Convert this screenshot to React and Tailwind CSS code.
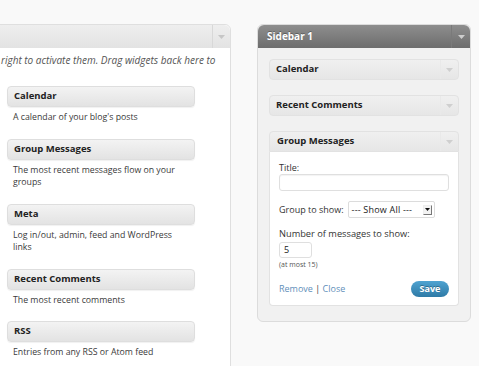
import React from "react";

const font = { fontFamily: '"Open Sans", "Liberation Sans", sans-serif' };

const Arrow = ({ color = "#bdbdbd" }) => (
    <svg width="7" height="4" viewBox="0 0 7 4"><path d="M0 0h7L3.5 4z" fill={color} /></svg>
);

const availableWidgets = [
    { title: "Calendar", desc: ["A calendar of your blog's posts"] },
    { title: "Group Messages", desc: ["The most recent messages flow on your", "groups"] },
    { title: "Meta", desc: ["Log in/out, admin, feed and WordPress", "links"] },
    { title: "Recent Comments", desc: ["The most recent comments"] },
    { title: "RSS", desc: ["Entries from any RSS or Atom feed"] },
];

const AvailableWidget = ({ title, desc }) => (
    <div className="w-[188px]">
        <div className="h-[21px] rounded-[4px] border border-[#dedede] bg-gradient-to-b from-[#f3f3f3] to-[#e3e3e3] shadow-[0_1px_1px_rgba(0,0,0,0.06)] pl-[6px] flex items-center text-[9.5px] font-bold text-[#222]">
            {title}
        </div>
        <div className="pt-[4px] pb-[15px] pl-[6px] text-[8.75px] leading-[12.5px] text-[#3a3a3a] whitespace-nowrap">
            {desc.map((line) => <div key={line}>{line}</div>)}
        </div>
    </div>
);

const SidebarWidget = ({ title }) => (
    <div className="h-[21px] rounded-[4px] border border-[#e2e2e2] bg-gradient-to-b from-[#f0f0f0] to-[#e6e6e6] flex items-center">
        <span className="flex-1 pl-[6px] text-[9.5px] font-bold text-[#222]">{title}</span>
        <span className="w-[18px] h-full border-l border-[#e9e9e9] flex items-center justify-center"><Arrow color="#cfcfcf" /></span>
    </div>
);

export default function App() {
    return (
        <div style={font} className="w-[479px] h-[366px] overflow-hidden bg-[#f9f9f9] flex items-start pt-[24px]">
            {/* Inactive widgets panel */}
            <div className="ml-[-8px] w-[239px] h-[360px] shrink-0 bg-white border border-[#dfdfdf] rounded-tr-[6px] flex flex-col">
                <div className="h-[23px] bg-gradient-to-b from-[#eeeeee] to-[#e3e3e3] rounded-tr-[6px] flex justify-end">
                    <span className="w-[18px] h-full border-l border-[#d8d8d8] flex items-center justify-center"><Arrow color="#c6c6c6" /></span>
                </div>
                <p className="pl-[8px] pt-[5px] text-[10px] italic text-[#555] whitespace-nowrap">right to activate them. Drag widgets back here to</p>
                <div className="pl-[14px] pt-[18px]">
                    {availableWidgets.map((w) => <AvailableWidget key={w.title} {...w} />)}
                </div>
            </div>

            {/* Sidebar 1 */}
            <div className="ml-[26px] w-[214px] shrink-0 rounded-[6px] border border-[#dcdcdc] bg-[#f1f1f1] flex flex-col pb-[15px]">
                <div className="h-[23px] rounded-t-[6px] bg-gradient-to-b from-[#8e8e8e] to-[#6d6d6d] flex items-center">
                    <span className="flex-1 pl-[9px] text-[10px] font-bold text-white [text-shadow:0_-1px_0_rgba(0,0,0,0.3)]">Sidebar 1</span>
                    <span className="w-[19px] h-full border-l border-[#7a7a7a] flex items-center justify-center"><Arrow color="#cdcdcd" /></span>
                </div>
                <div className="px-[11px] pt-[11px] flex flex-col gap-[15px]">
                    <SidebarWidget title="Calendar" />
                    <SidebarWidget title="Recent Comments" />
                    <div>
                        <div className="h-[21px] rounded-t-[4px] border border-[#e2e2e2] bg-gradient-to-b from-[#f0f0f0] to-[#e6e6e6] flex items-center">
                            <span className="flex-1 pl-[7px] text-[9.5px] font-bold text-[#222]">Group Messages</span>
                            <span className="w-[18px] h-full border-l border-[#e9e9e9] flex items-center justify-center"><Arrow color="#cfcfcf" /></span>
                        </div>
                        <div className="bg-white border border-t-0 border-[#e2e2e2] rounded-b-[4px] px-[9px] pt-[10px] pb-[8px] text-[9px] text-[#333]">
                            <div className="leading-[12px]">Title:</div>
                            <div className="h-[17px] w-[170px] rounded-[3px] border border-[#dfdfdf] bg-white shadow-[inset_0_1px_1px_rgba(0,0,0,0.05)]" />
                            <div className="mt-[10px] flex items-center gap-[4px]">
                                <span>Group to show:</span>
                                <div className="h-[17px] w-[87px] rounded-[2px] border border-[#dcdcdc] bg-white flex items-center pl-[3px] pr-[2px] text-[9px] text-[#222]">
                                    <span className="flex-1 whitespace-nowrap tracking-[0.2px]">--- Show All ---</span>
                                    <span className="w-[9px] h-[10px] border-r border-b border-[#777] border-t border-l border-t-[#eee] border-l-[#eee] bg-[#f3f3f3] flex items-center justify-center">
                                        <svg width="5" height="3" viewBox="0 0 5 3"><path d="M0 0h5L2.5 3z" fill="#111" /></svg>
                                    </span>
                                </div>
                            </div>
                            <div className="mt-[10px] leading-[12px] text-[9.25px]">Number of messages to show:</div>
                            <div className="mt-[2px] h-[16px] w-[33px] rounded-[3px] border border-[#dfdfdf] bg-white pl-[4px] flex items-center text-[9px] text-[#222]">5</div>
                            <div className="mt-[2px] text-[7px] text-[#555] leading-[10px]">(at most 15)</div>
                            <div className="mt-[11px] flex items-center justify-between">
                                <span className="text-[#5f8fba]">Remove <span className="text-[#444]">|</span> Close</span>
                                <span className="h-[16px] w-[38px] rounded-full bg-gradient-to-b from-[#4fa3d1] to-[#2e7aa6] text-white font-bold text-[9px] flex items-center justify-center [text-shadow:0_-1px_0_rgba(0,0,0,0.3)]">Save</span>
                            </div>
                        </div>
                    </div>
                </div>
            </div>
        </div>
    );
}
